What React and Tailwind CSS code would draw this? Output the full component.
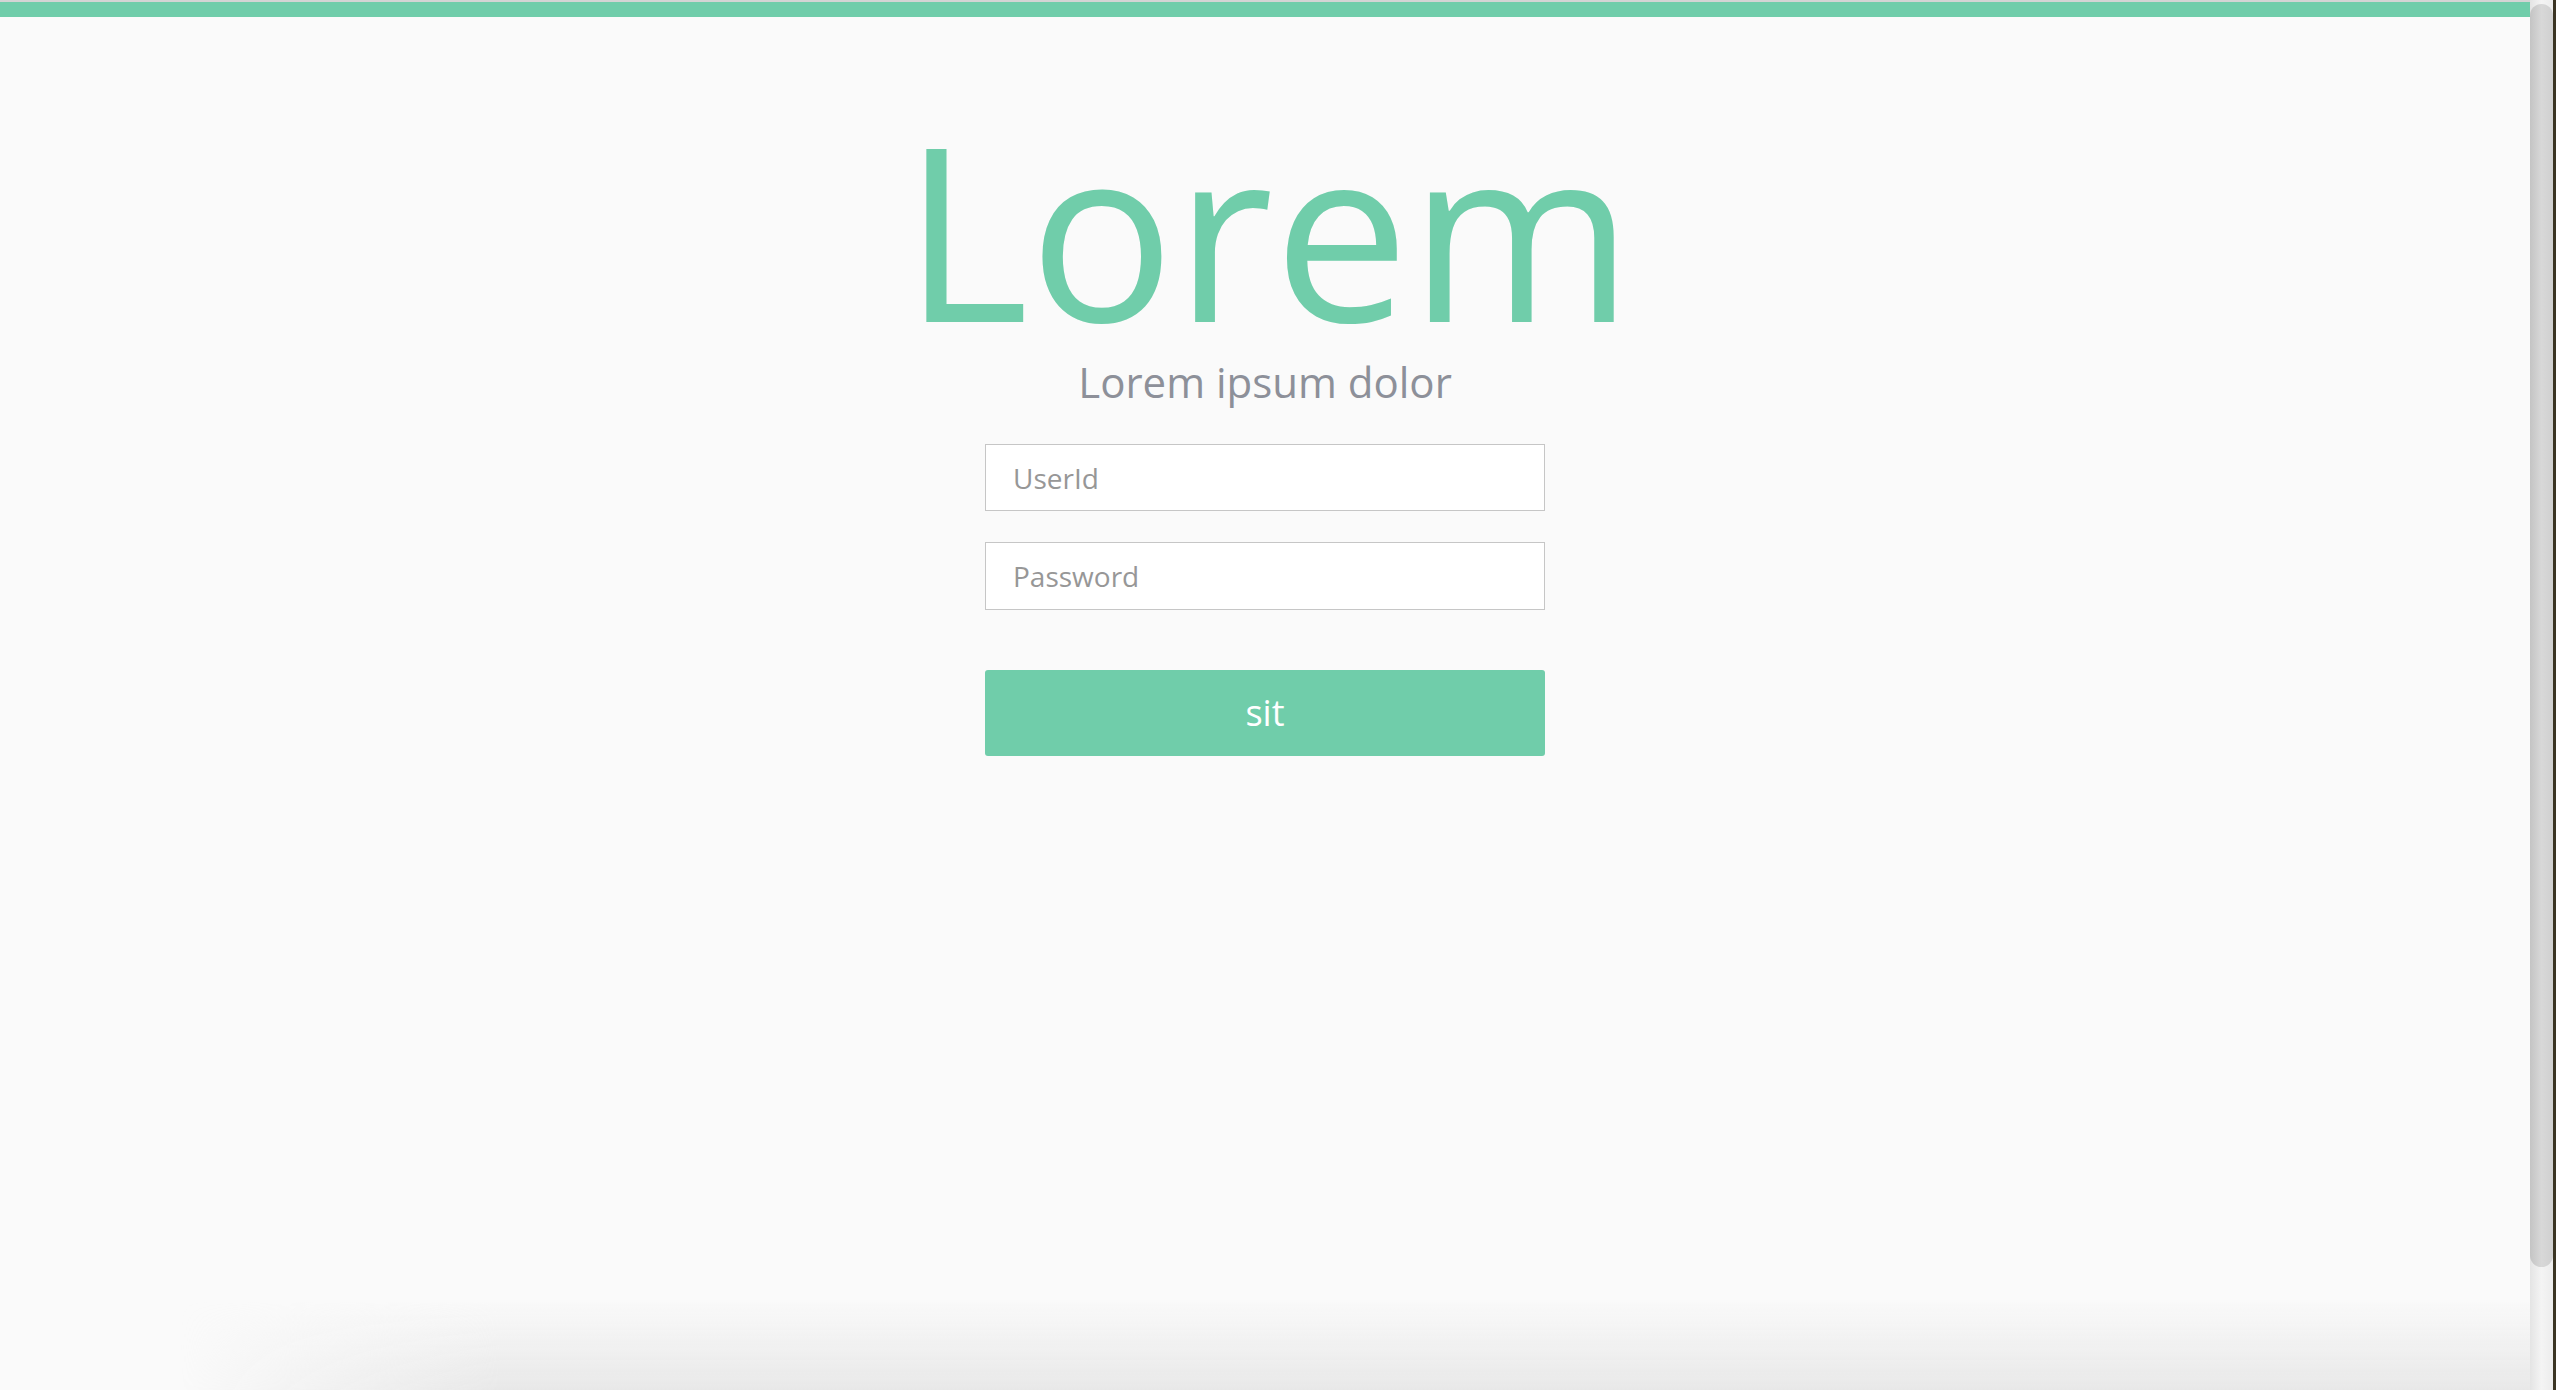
export default function App() {
  return (
    <div className="flex h-[1390px] w-full overflow-hidden bg-[#fafafa] font-['Open_Sans',sans-serif]">
      {/* PAGINA */}
      <div className="relative flex flex-1 flex-col">
        <div className="h-[2px] bg-[#d4d4d4]" />
        <div className="h-[15px] bg-[#70cdaa]" />

        <div className="flex flex-col items-center pt-[111px]">
          <h1 className="pl-[6px] text-[242px] leading-[200px] text-[#70cdaa]">Lorem</h1>
          <p className="mt-[33px] text-[42px] leading-none text-[#8d9099]">Lorem ipsum dolor</p>

          <form className="mt-[41px] flex w-[560px] flex-col" onSubmit={e => e.preventDefault()}>
            <input
              type="text"
              placeholder="UserId"
              className="h-[67px] border border-[#c6c6c6] bg-white pl-[27px] text-[28px] text-[#555] outline-none placeholder:text-[#979797]"
            />
            <input
              type="password"
              placeholder="Password"
              className="mt-[31px] h-[68px] border border-[#c6c6c6] bg-white pl-[27px] text-[28px] text-[#555] outline-none placeholder:text-[#979797]"
            />
            <button
              type="submit"
              className="mt-[60px] h-[86px] rounded-[3px] bg-[#70cdaa] text-[36px] text-white"
            >
              sit
            </button>
          </form>
        </div>

        {/* SOMBRA DA JANELA */}
        <div className="pointer-events-none absolute bottom-0 left-[180px] right-0 h-[90px] bg-gradient-to-b from-transparent to-[#e8e8e8] [mask-image:linear-gradient(to_right,transparent,black_320px)]" />
      </div>

      {/* BARRA DE ROLAGEM */}
      <div className="flex w-[26px]">
        <div className="flex w-[23px] flex-col bg-gradient-to-r from-[#e4e4e4] via-[#f4f4f4] to-[#ececec]">
          <div className="mt-[4px] h-[1263px] rounded-full bg-gradient-to-r from-[#c4c4c4] via-[#d8d8d8] to-[#d0d0d0]" />
        </div>
        <div className="w-[3px] bg-[#3b3524]" />
      </div>
    </div>
  )
}
